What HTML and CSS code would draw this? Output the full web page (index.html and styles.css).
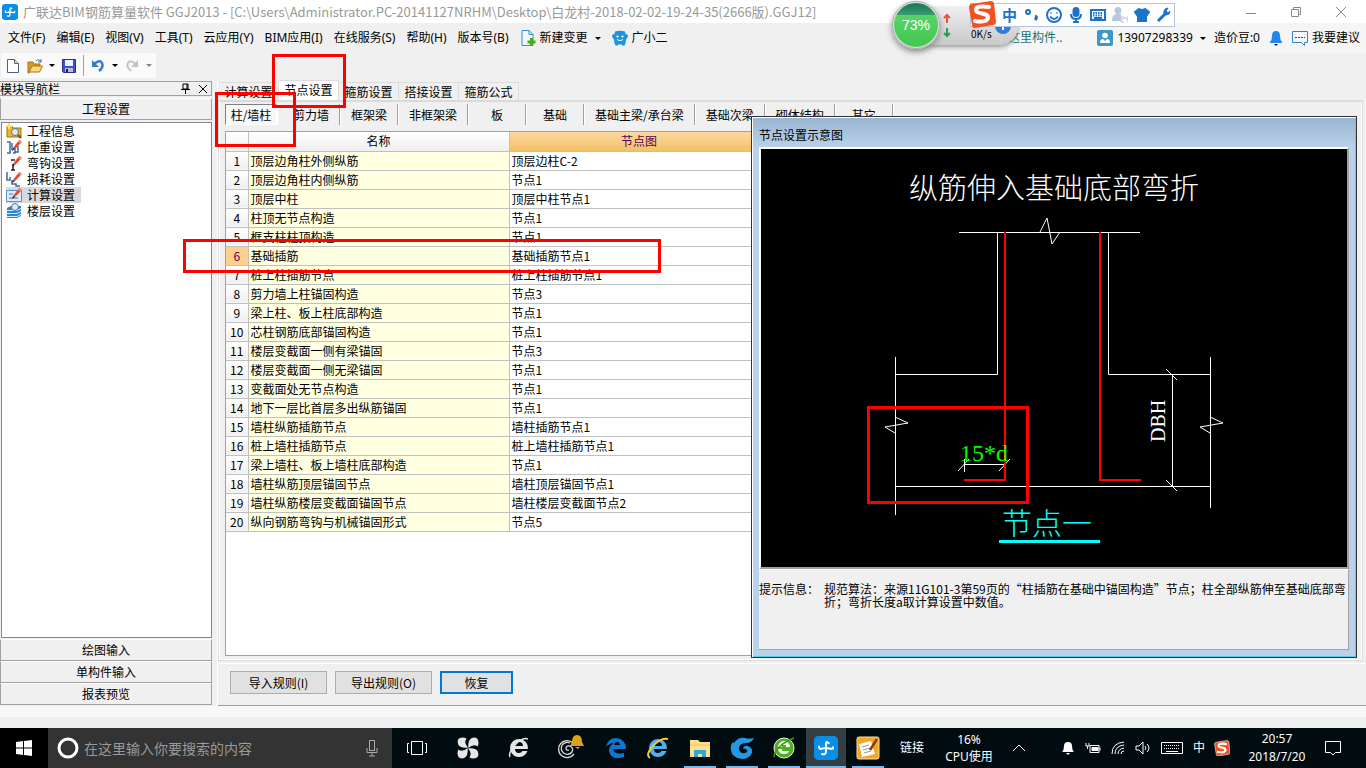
FILE: index.html
```html
<!DOCTYPE html>
<html lang="zh-CN">
<head>
<meta charset="utf-8">
<title>广联达BIM钢筋算量软件 GGJ2013</title>
<link rel="stylesheet" href="styles.css">
</head>
<body>
<svg class="defs" aria-hidden="true">
  <symbol id="glodon" viewBox="0 0 16 16"><rect width="16" height="16" rx="3" fill="#0a8fe8"/><path d="M9.800 4.800Q8 2.800 8 5.500V10q0 3-2.600 2M3.300 7q0 1.800 1.700 1.500 3-1 6 0 2 .3 1.700-1" fill="none" stroke="#fff" stroke-width="1.300" stroke-linecap="round"/></symbol>
  <symbol id="sogou" viewBox="0 0 28 28"><path d="M3 4 23 1q2 0 3 2l2 19q0 2-2 3L7 28q-3 0-3-3L1 7q0-2 2-3z" fill="#f4511e"/><path d="M21 7Q8 5 8 10c0 5 13 2 12 8-1 4-8 4-13 3" fill="none" stroke="#fff" stroke-width="4" stroke-linecap="round"/></symbol>
  <symbol id="pencil" viewBox="0 0 16 16"><path d="m7 9 6-8 3 2-7 7z" fill="#e8492a"/><path d="m7 9 2 1-3 2z" fill="#222"/><path d="m12 2 3 2" stroke="#ffb9a5"/></symbol>
  <symbol id="ie" viewBox="0 0 24 24"><path d="M12 3a9 9 0 1 0 8.500 12h-5a4 4 0 0 1-7.500-2h13A9 9 0 0 0 12 3zm-4 7a4 4 0 0 1 8 0z" fill="currentColor"/></symbol>
</svg>

<header class="titlebar">
  <svg class="i16"><use href="#glodon"/></svg>
  <h1>广联达BIM钢筋算量软件 GGJ2013 - [C:\Users\Administrator.PC-20141127NRHM\Desktop\白龙村-2018-02-02-19-24-35(2666版).GGJ12]</h1>
  <div class="winbtns">
    <button aria-label="最小化"><svg class="i12"><path d="M1 7.500h10"/></svg></button>
    <button aria-label="还原"><svg class="i12"><path d="M1.500 3.500h7v7h-7zM3.500 3V1.500h7v7H9"/></svg></button>
    <button aria-label="关闭"><svg class="i12"><path d="m1 1 10 10M11 1 1 11"/></svg></button>
  </div>
</header>

<nav class="menubar">
  <button>文件(F)</button><button>编辑(E)</button><button>视图(V)</button><button>工具(T)</button><button>云应用(Y)</button><button>BIM应用(I)</button><button>在线服务(S)</button><button>帮助(H)</button><button>版本号(B)</button>
  <button class="ico"><svg class="i16" viewBox="0 0 16 16"><path d="M2 .5h7l4 4v11H2z" fill="#eef7fd" stroke="#3a8cc4"/><path d="M9 .5v4h4" fill="none" stroke="#3a8cc4"/><path d="M10 8h3v2.500h2.500v3H13V16h-3v-2.500H7.500v-3H10z" fill="#47ab22"/></svg>新建变更<i class="caret"></i></button>
  <button class="ico"><svg class="i16" viewBox="0 0 16 16"><path d="M3 1.500q5-1.500 10 0l.5 2.500q3.500 0 2 3.500l-1.500 2q0 3-1.500 6h-2.500v-1H6v1H3.500Q2 12.500 2 9.500L.5 7.500Q-1 4 2.500 4z" fill="#1d93e0"/><circle cx="5.500" cy="6.500" r="1.100" fill="#fff"/><circle cx="10.500" cy="6.500" r="1.100" fill="#fff"/><path d="M5 9.500q3 2.500 6 0" fill="none" stroke="#fff"/></svg>广小二</button>
  <div class="account">
    <a class="promo" href="#">这里构件..</a>
    <button class="ico"><svg class="i16" viewBox="0 0 16 16"><rect width="16" height="16" rx="2" fill="#3f97c9"/><circle cx="8" cy="5.500" r="2.800" fill="#fff"/><path d="M3 13q0-4 3-4l2 2 2-2q3 0 3 4z" fill="#fff"/></svg>13907298339<i class="caret"></i></button>
    <span>造价豆:0</span>
    <button aria-label="通知"><svg class="i16 bell" viewBox="0 0 16 16"><path d="M8 1q4 0 4 5 0 4 2 6v1H2v-1q2-2 2-6 0-5 4-5z" fill="#2186f0"/><path d="M6 14h4l-2 2z" fill="#111"/></svg></button>
    <button class="ico"><svg class="i16" viewBox="0 0 16 16"><path d="M.5 1.500h15v11h-3v3l-3-3h-9z" fill="#f7fbff" stroke="#2e84dc"/><path d="M3 7.500h10" stroke="#174a84" stroke-dasharray="2 1"/></svg>我要建议</button>
  </div>
</nav>

<div class="toolbar">
  <div class="tools">
    <button aria-label="新建"><svg class="i16" viewBox="0 0 16 16"><path d="M2.500 1.500h7l4 4v9h-11z" fill="#fff" stroke="#4a627c"/><path d="M9.500 1.500v4h4" fill="#c9dcee" stroke="#4a627c"/></svg></button>
    <button aria-label="打开"><svg class="i16" viewBox="0 0 16 16"><path d="M1 4h5l1 2h6v3H5l-3 6H1z" fill="#d99a1e" stroke="#a87419"/><path d="m2 14 3-6h10.500l-3 6z" fill="#fbd878" stroke="#a87419"/><path d="M9 3q3-3 5 1m0-3v3h-3" fill="none" stroke="#4b6d93"/></svg></button><i class="caret"></i>
    <button aria-label="保存"><svg class="i16" viewBox="0 0 16 16"><path d="M1.500 1.500h13v13h-12l-1-1z" fill="#4351c9" stroke="#28308c"/><path d="M4 2h8v6H4z" fill="#eef1ff"/><path d="M4 10h8v4H4z" fill="#b9bfd0"/><path d="M5 11h2v3H5z" fill="#222"/></svg></button>
    <span class="sep"></span>
    <button aria-label="撤销"><svg class="i16" viewBox="0 0 16 16"><path d="M4 6q6-5 8-1 2 4-3 8" fill="none" stroke="#3979cf" stroke-width="2.500"/><path d="M2 2v7h7z" fill="#3979cf"/></svg></button><i class="caret"></i>
    <button aria-label="重做"><svg class="i16" viewBox="0 0 16 16"><path d="M12 6Q6 1 4 5q-2 4 3 8" fill="none" stroke="#c3c3c3" stroke-width="2"/><path d="M14 2v7H7z" fill="#c3c3c3"/></svg></button><i class="caret off"></i>
  </div>
</div>

<main class="workspace">
  <aside class="nav">
    <div class="navhead"><span>模块导航栏</span>
      <button aria-label="固定"><svg class="i12"><path d="M4 1h5v5H4zM2 6.500h9M6.500 7v4M8 1v5" stroke="#000"/></svg></button>
      <button aria-label="关闭面板"><svg class="i12"><path d="m2 2 8 8M10 2l-8 8" stroke="#000"/></svg></button></div>
    <button class="group">工程设置</button>
    <ul class="tree">
      <li><svg class="i16" viewBox="0 0 16 16"><path d="M1 3h5l1 2h8v9H1z" fill="#f0b429" stroke="#9b7414"/><circle cx="9" cy="9" r="3.500" fill="#d7edff" stroke="#59728a"/><path d="m12 12 3 3" stroke="#7b4a20" stroke-width="2"/><path d="M3 0v6M0 3h6" stroke="#ffe36b" stroke-width="2"/></svg>工程信息</li>
      <li><svg class="i16" viewBox="0 0 16 16"><path d="M1 3h3v11H1M7 14h2V9M6 4v7M12 7v6h-3" fill="none" stroke="#3c6ea8" stroke-width="1.500"/><use href="#pencil"/></svg>比重设置</li>
      <li><svg class="i16" viewBox="0 0 16 16"><path d="M5 5h4M7 9v6M5 15h4" stroke="#222" stroke-width="1.500"/><use href="#pencil"/></svg>弯钩设置</li>
      <li><svg class="i16" viewBox="0 0 16 16"><path d="M1 1v8h3V6M6 9v4h4v2h4" fill="none" stroke="#3c6ea8" stroke-width="1.500"/><use href="#pencil"/></svg>损耗设置</li>
      <li class="on"><svg class="i16" viewBox="0 0 16 16"><path d="M.5 3.500h15v11H.5z" fill="#dcecff" stroke="#5b8fd0"/><path d="M3 7h4M3 11h9" stroke="#3b78c4"/><use href="#pencil"/></svg>计算设置</li>
      <li><svg class="i16" viewBox="0 0 16 16"><path d="m1 5 4-2h10v10l-4 2H1z" fill="#2e86cf"/><path d="M1 7.500h10l4-2M1 10.500h10l4-2M1 13.500h10l4-2" fill="none" stroke="#d6ecff"/><circle cx="9" cy="4" r="3.500" fill="#d7edff" stroke="#59728a"/></svg>楼层设置</li>
    </ul>
    <button class="group">绘图输入</button>
    <button class="group">单构件输入</button>
    <button class="group">报表预览</button>
  </aside>

  <section class="content">
    <div class="tabs" role="tablist">
      <button role="tab">计算设置</button><button role="tab" class="on" aria-selected="true">节点设置</button><button role="tab">箍筋设置</button><button role="tab">搭接设置</button><button role="tab">箍筋公式</button>
    </div>
    <div class="pane">
      <div class="subtabs">
        <button class="on">柱/墙柱</button><button>剪力墙</button><button>框架梁</button><button>非框架梁</button><button>板</button><button>基础</button><button>基础主梁/承台梁</button><button>基础次梁</button><button>砌体结构</button><button>其它</button>
      </div>
      <div class="grid">
        <table>
          <colgroup><col class="c1"><col class="c2"><col class="c3"></colgroup>
          <thead><tr><th></th><th>名称</th><th class="hot">节点图</th></tr></thead>
          <tbody>
            <tr><th>1</th><td>顶层边角柱外侧纵筋</td><td>顶层边柱C-2</td></tr>
            <tr><th>2</th><td>顶层边角柱内侧纵筋</td><td>节点1</td></tr>
            <tr><th>3</th><td>顶层中柱</td><td>顶层中柱节点1</td></tr>
            <tr><th>4</th><td>柱顶无节点构造</td><td>节点1</td></tr>
            <tr><th>5</th><td>框支柱柱顶构造</td><td>节点1</td></tr>
            <tr class="cur"><th>6</th><td>基础插筋</td><td>基础插筋节点1</td></tr>
            <tr><th>7</th><td>桩上柱插筋节点</td><td>桩上柱插筋节点1</td></tr>
            <tr><th>8</th><td>剪力墙上柱锚固构造</td><td>节点3</td></tr>
            <tr><th>9</th><td>梁上柱、板上柱底部构造</td><td>节点1</td></tr>
            <tr><th>10</th><td>芯柱钢筋底部锚固构造</td><td>节点1</td></tr>
            <tr><th>11</th><td>楼层变截面一侧有梁锚固</td><td>节点3</td></tr>
            <tr><th>12</th><td>楼层变截面一侧无梁锚固</td><td>节点1</td></tr>
            <tr><th>13</th><td>变截面处无节点构造</td><td>节点1</td></tr>
            <tr><th>14</th><td>地下一层比首层多出纵筋锚固</td><td>节点1</td></tr>
            <tr><th>15</th><td>墙柱纵筋插筋节点</td><td>墙柱插筋节点1</td></tr>
            <tr><th>16</th><td>桩上墙柱插筋节点</td><td>桩上墙柱插筋节点1</td></tr>
            <tr><th>17</th><td>梁上墙柱、板上墙柱底部构造</td><td>节点1</td></tr>
            <tr><th>18</th><td>墙柱纵筋顶层锚固节点</td><td>墙柱顶层锚固节点1</td></tr>
            <tr><th>19</th><td>墙柱纵筋楼层变截面锚固节点</td><td>墙柱楼层变截面节点2</td></tr>
            <tr><th>20</th><td>纵向钢筋弯钩与机械锚固形式</td><td>节点5</td></tr>
          </tbody>
        </table>
      </div>
    </div>
    <div class="actions">
      <button>导入规则(I)</button><button>导出规则(O)</button><button class="default">恢复</button>
    </div>
  </section>
</main>

<section class="dialog" role="dialog" aria-labelledby="dlg">
  <h2 id="dlg">节点设置示意图</h2>
  <div class="canvas">
    <svg viewBox="761 149 586 418">
      <g class="white">
        <path d="M959 232.500h181M997.500 232v142.500H895M1108.500 232v142.500h102M895.500 357v158M1210.500 357v151M895 486.500h316M1172.500 374v112M964 464.500h41M964.500 459v13"/>
        <path d="m1040 232 7-14 5 26 8-12M895 417l13 6-23 4 10 6M1210 417l13 6-23 4 10 6M1166 369l11 11M1166 480l11 11M958 471l11-12M999 471l11-12"/>
      </g>
      <path class="rebar" d="M1005 232v248h-41M1100 232v248h41"/>
      <text class="cap" x="909" y="199">纵筋伸入基础底部弯折</text>
      <text class="dim" x="960" y="461">15*d</text>
      <text class="dbh" transform="translate(1165 442) rotate(-90)">DBH</text>
      <text class="node" x="1002" y="534">节点一</text>
      <path class="under" d="M999 541.500h101"/>
    </svg>
  </div>
  <div class="tip"><span>提示信息：</span><p>规范算法：来源11G101-3第59页的“柱插筋在基础中锚固构造”节点；柱全部纵筋伸至基础底部弯<br>折；弯折长度a取计算设置中数值。</p></div>
</section>

<div class="speed">
  <div class="ball">73%</div>
  <svg class="arrows" viewBox="0 0 8 24"><path d="M4 10V3M1 5l3-3 3 3" stroke="#e4573d"/><path d="M4 15v7m-3-2 3 3 3-3" stroke="#2a9c55"/></svg>
  <span>0K/s</span>
  <svg class="plus" viewBox="0 0 16 16"><circle cx="8" cy="8" r="8" fill="#3579dc"/><path d="M8 4v8M4 8h8" stroke="#fff" stroke-width="2"/></svg>
</div>
<div class="ime">
  <svg class="logo"><use href="#sogou"/></svg>
  <strong>中</strong>
  <svg viewBox="0 0 16 16"><circle cx="4" cy="5" r="2"/><path d="M11 9q3 1 0 4" stroke-width="3"/></svg>
  <svg viewBox="0 0 16 16"><circle cx="8" cy="8" r="7"/><path d="M5 5.500v1M11 5.500v1M4 9.500q4 5 8 0"/></svg>
  <svg viewBox="0 0 16 16"><rect x="5.500" y="1" width="5" height="8" rx="2.500" fill="#1d73c8"/><path d="M3 7q0 5 5 5t5-5M8 12v3M5 15h6"/></svg>
  <svg viewBox="0 0 16 16"><rect x="1" y="3" width="14" height="10"/><path d="M3 6h10M3 8.500h10" stroke-dasharray="1.500 1"/><path d="M4 11h8"/></svg>
  <svg viewBox="0 0 16 16" class="pale"><circle cx="6" cy="3.500" r="2.500" fill="#b9c8dc"/><path d="M1 13q0-5 4-5h3v5z" fill="#b9c8dc"/><path d="M9 10h3v2H9v3h3m2-5v2h2m0-3v6" stroke-width="1"/></svg>
  <svg viewBox="0 0 16 16"><path d="m5 2-4 3 2 3 1-1v7h8V7l1 1 2-3-4-3q-3 2-6 0z" fill="#1d73c8"/></svg>
  <svg viewBox="0 0 16 16"><path d="m2 14 7-7" stroke-width="3"/><path d="M14 4q0 4-4 4-3-1-2-4 1-3 4-3l-2 3 2 2z" fill="#1d73c8" stroke-width="1"/></svg>
</div>

<div class="mark m1"></div><div class="mark m2"></div><div class="mark m3"></div><div class="mark m4"></div>

<footer class="taskbar">
  <button class="start" aria-label="开始"><svg class="i16" viewBox="0 0 16 16"><path d="m0 2 7-1v6.500H0zM8 1l8-1v7.500H8zM0 8.500h7V15l-7-1zM8 8.500h8V16l-8-1z" fill="#fff"/></svg></button>
  <label class="search"><svg class="ring" viewBox="0 0 22 22"><circle cx="11" cy="11" r="9"/></svg><input type="text" placeholder="在这里输入你要搜索的内容" aria-label="搜索"><svg class="mic" viewBox="0 0 12 18"><rect x="3.500" y="1.500" width="5" height="10"/><path d="M1 9v4.500h10V9M6 14v3M3 17h6"/></svg></label>
  <div class="apps">
    <button aria-label="任务视图"><svg viewBox="0 0 24 24" class="line"><path d="M6.500 5.500h11v13h-11zM4 7.500H2.500v9H4M20 7.500h1.500v9H20"/></svg></button>
    <button aria-label="应用"><svg viewBox="0 0 24 24" fill="#e6e6e6"><path id="petal" d="M12 11.500Q5 12.500 2.500 9 .5 5 3 2.500q4-2 7.500 0-3 4 1.500 9z"/><use href="#petal" transform="rotate(90 12 12)"/><use href="#petal" transform="rotate(180 12 12)"/><use href="#petal" transform="rotate(270 12 12)"/></svg></button>
    <button aria-label="浏览器" class="grey"><svg viewBox="0 0 24 24"><use href="#ie"/><path d="M3 21Q1 17 8 9t13-6" fill="none" stroke="#e6e6e6" stroke-width="1.500"/></svg></button>
    <button aria-label="提醒"><svg class="wide" viewBox="0 0 28 26"><path d="M17 8A8.500 8.500 0 1 0 18 19M14 8a6 6 0 1 0 2 9q2-4-2-6-4-1-4 3 1 2 3 1" fill="none" stroke="#ddd" stroke-width="1.300"/><path d="M21 0q5 0 5 7l2 4H14l2-4q0-7 5-7zM19 12h5l-2 2z" fill="#e0a011"/></svg></button>
    <button aria-label="Edge" class="edge"><svg viewBox="0 0 24 24"><path d="M2 11Q4 2 12 2q10 1 10 11H9q1 6 11 4v4Q7 25 5 15q0-5 5-8-5 0-8 4zm8-2h6q-1-4-3-3-2 0-3 3z" fill="#0b78d6"/></svg></button>
    <button aria-label="Internet Explorer" class="blue"><svg viewBox="0 0 24 24"><use href="#ie"/><path d="M4 22Q-1 19 7 10T22 3" fill="none" stroke="#f7c835" stroke-width="2"/></svg></button>
    <button aria-label="文件资源管理器" class="run"><svg viewBox="0 0 24 24"><path d="M2 4h8l2 2h10v15H2z" fill="#ffdf8a"/><path d="M2 9h20" stroke="#f4c14f"/><path d="M6 21v-7h12v7h-4v-3h-4v3z" fill="#2ba7dc"/></svg></button>
    <button aria-label="广联达G" class="run"><svg viewBox="0 0 24 24"><path d="M24 2q-2 5-8 5-7 0-7 6 1 5 6 4 3-1 2-3-2-2-4-1 1-4 5-3 5 2 4 7-3 6-10 6Q2 22 1 14q-1-5 2-8l1 1q4-6 11-5 5 1 9 0z" fill="#2597e4"/></svg></button>
    <button aria-label="360浏览器" class="run"><svg viewBox="0 0 24 24"><circle cx="12" cy="12" r="10" fill="#4fb022" stroke="#e6f7da"/><path d="M12 5a6 6 0 0 0-6 6h12a6 6 0 0 0-6-6zM6 13h12q-1 5-6 5t-6-5z" fill="#fff"/><path d="M10 9h4v2h-4zM10 13h8v2h-8z" fill="#4fb022"/><path d="M2 21Q3 10 22 2" fill="none" stroke="#3f9b18" stroke-width="1.500"/></svg></button>
    <button aria-label="广联达BIM" class="run cur"><svg><use href="#glodon"/></svg></button>
    <button aria-label="记事" class="run"><svg viewBox="0 0 24 24"><rect x="1" y="1" width="22" height="22" rx="2" fill="#f5a623" stroke="#ffe2a6"/><path d="M3 8 15 5l4 13-13 3z" fill="#fff"/><path d="m6 11 7-2M7 14l7-2M8 17l7-2" stroke="#997"/><path d="m14 14 7-11" stroke="#8c3b12" stroke-width="2.500"/></svg></button>
  </div>
  <div class="tray">
    <span>链接</span>
    <span class="cpu">16%<br>CPU使用</span>
    <svg class="chev" viewBox="0 0 16 16"><path d="m2 11 6-6 6 6"/></svg>
    <div class="icons">
      <svg viewBox="0 0 16 16"><path d="M2 12q2-2 2-6 0-4 4-4t4 4q0 4 2 6zM6 13h4l-2 2z" fill="#fff" stroke="none"/></svg>
      <svg viewBox="0 0 16 16"><path d="M5 5.500h9v7H5zM15 7.500v3"/><path d="M7 7.500h6v3H7z" fill="#fff"/><path d="M1 3v3h3V3M2.500 6v3"/></svg>
      <svg viewBox="0 0 16 16"><path d="M2 14Q2 3 14 2M5 14q0-8 9-9M8 14q0-5 6-6M11 14q0-3 3-3"/></svg>
      <svg viewBox="0 0 16 16"><path d="M1 6h3l4-4v12l-4-4H1zM10 6q2 2 0 4M12 4q4 4 0 8"/></svg>
      <svg class="kb" viewBox="0 0 24 16"><path d="M1.500 2.500h21v11h-21z"/><path d="M4 5.500h16M4 8.500h16" stroke-dasharray="1 1"/><path d="M6 11.500h12"/></svg>
      <span>中</span>
      <svg viewBox="0 0 28 28"><use href="#sogou"/></svg>
    </div>
    <span class="clock">20:57<br>2018/7/20</span>
    <button class="note" aria-label="操作中心"><svg class="i16" viewBox="0 0 16 16"><path d="M.5 1.500h15v11h-5L8 15l-2.500-2.500h-5z"/></svg></button>
  </div>
</footer>
</body>
</html>
```
FILE: styles.css
```css
* { box-sizing: border-box; }
body {
  margin: 0; height: 100vh; display: flex; flex-direction: column;
  position: relative; overflow: hidden; background: #f0f0f0; color: #000;
  font: 12px/16px "Noto Sans CJK SC", sans-serif;
}
button { font: inherit; color: inherit; background: none; border: 0; padding: 0; margin: 0; white-space: nowrap; }
h1, h2, p, ul { margin: 0; padding: 0; font: inherit; }
svg { flex: none; }
.defs { position: absolute; width: 0; height: 0; }
.i16 { width: 16px; height: 16px; }
.i12 { width: 12px; height: 12px; fill: none; stroke: #888; display: block; }
.caret { border: 3px solid transparent; border-top-color: #000; border-bottom: 0; width: 6px; flex: none; }
.off { border-top-color: #888; }

.titlebar, .menubar, .account { font-family: "Noto Sans", "Noto Sans CJK SC", sans-serif; }
.titlebar { height: 23px; flex: none; display: flex; align-items: center; gap: 5px; padding-left: 2px; background: #fff; color: #999; }
.titlebar h1 { flex: 1; white-space: nowrap; font: 13px/16px "Noto Sans CJK SC", sans-serif; }
.winbtns { display: flex; gap: 33px; padding-right: 19px; }

.menubar { height: 30px; flex: none; display: flex; align-items: center; gap: 11px; padding-left: 8px; }
.ico { display: flex; align-items: center; gap: 4px; }
.ico .caret { margin-left: 3px; }
.account { margin-left: auto; align-self: stretch; display: flex; align-items: center; gap: 8px; padding-right: 6px; background: #f5f5f5; }
.bell { display: block; }
.promo { color: #167272; text-decoration: none; margin-right: 27px; }

.toolbar { height: 28px; flex: none; padding-left: 1px; }
.tools { display: inline-flex; align-items: center; gap: 6px; height: 25px; padding: 0 4px; background: #fafafa; }
.tools .i16 { display: block; }
.sep { width: 1px; height: 21px; background: #a0a0a0; }

.workspace { flex: 1; min-height: 0; display: flex; gap: 5px; }
.workspace::after { content: none; }
.nav { width: 212px; flex: none; display: flex; flex-direction: column; padding-bottom: 1px; }
.navhead { height: 15px; line-height: 13px; display: flex; align-items: center; gap: 6px; padding-right: 2px; margin-bottom: 2px; border: 1px solid #a0a0a0; border-left: 0; }
.navhead span { flex: 1; font-size: 12px; }
.group { height: 22px; background: #f0f0f0; border: 1px solid #a0a0a0; border-top-color: #fff; }
.tree { flex: 1; list-style: none; margin: 2px 0 1px 1px; padding: 0 4px; background: #fff; border: 1px solid #828790; }
.tree li { display: flex; align-items: center; gap: 5px; width: 75px; height: 16px; white-space: nowrap; }
.tree .on { background: #d9d9d9; }

.workspace { margin-bottom: 22px; box-shadow: 0 11px #f8f8f8; }
.content { flex: 1; min-width: 0; display: flex; flex-direction: column; border-left: 1px solid #fff; }
.tabs { display: flex; align-items: flex-end; height: 19px; padding-left: 1px; }
.tabs button { width: 60px; height: 18px; border: 1px solid #dcdcdc; border-bottom: 0; border-left-width: 0; }
.tabs .on { height: 20px; background: #fff; padding-bottom: 2px; }
.pane { flex: 1; min-height: 0; display: flex; flex-direction: column; margin-right: 3px; padding: 2px 4px 3px 5px; border: 2px solid #fff; border-top-color: #d9d9d9; outline: 1px solid #dcdcdc; outline-offset: -1px; }
.subtabs { display: flex; height: 21px; margin: 0 0 6px; }
.subtabs button { min-width: 58px; padding: 0 10px 0 11px; border-right: 1px solid #a0a0a0; box-shadow: 1px 0 #fff; }
.subtabs .on { min-width: 52px; padding: 0 4px; margin-right: 5px; background: #f8f8f8; border: 1px solid #fff; border-top-color: #808080; border-left-color: #808080; }
.grid { flex: 1; min-height: 0; background: #fff; border: 1px solid #a0a0a8; }
table { border-collapse: collapse; table-layout: fixed; width: 543px; }
.c1 { width: 22px; } .c2 { width: 261px; } .c3 { width: 260px; }
th, td { height: 19px; padding: 0 0 0 2px; line-height: 16px; font-weight: normal; text-align: left; white-space: nowrap; border-right: 1px solid #c0c0c0; border-bottom: 1px solid #c0c0c0; }
th { padding: 0; text-align: center; background: linear-gradient(#fff, #efefef); }
td:nth-child(2) { background: #ffffe1; }
.hot { background: linear-gradient(#fbd9a0, #f2c064); color: #5a005a; }
.cur th { background: #ffd08a; color: #5a005a; }
.actions { display: flex; gap: 8px; padding: 7px 12px 11px; margin-top: 2px; border-top: 1px solid #fff; border-bottom: 1px solid #a0a0a0; }
.actions button { width: 97px; height: 23px; background: #e1e1e1; border: 1px solid #adadad; }
.actions .default { width: 73px; border: 2px solid #0078d7; }

.dialog { position: absolute; top: 116px; right: 9px; width: 606px; padding: 0 7px 7px; border: 1px solid #333; background: linear-gradient(#99b4d1, #b9d1ea 30px); box-shadow: inset 1px 1px #fff, inset -1px -1px #5cc8f0; }
.dialog h2 { height: 30px; padding-top: 10px; }
.canvas { background: #000; border: 2px solid #fff; border-right-color: #a0a0a0; border-bottom-color: #a0a0a0; }
.canvas svg { display: block; width: 100%; }
.white { fill: none; stroke: #fff; }
.rebar { fill: none; stroke: #f00; stroke-width: 2; }
.cap { fill: #fff; font-size: 29px; font-weight: 300; }
.canvas .dim { fill: #0f0; font: 24px "Liberation Serif", serif; }
.dbh { fill: #fff; font: 20px "Liberation Serif", serif; }
.node { fill: #0ff; font-size: 30px; font-weight: 300; }
.under { stroke: #0ff; stroke-width: 3; }
.tip { display: flex; gap: 5px; height: 81px; padding-top: 12px; line-height: 13px; white-space: nowrap; background: #f0f0f0; border: 1px solid #fff; border-left: 0; border-right-color: #a0a0a0; border-bottom-color: #a0a0a0; }

.speed { position: absolute; left: 892px; top: 0; width: 128px; height: 50px; }
.speed::before { content: ""; position: absolute; left: 20px; top: 7px; width: 106px; height: 38px; border-radius: 4px 4px 19px 4px; background: linear-gradient(#efefef, #c9c9c9); box-shadow: 0 2px 4px #999; }
.ball { position: absolute; left: 0; top: 1px; width: 48px; height: 48px; border: 2px solid #e4e4e4; outline: 1px solid #aaa; outline-offset: -1px; border-radius: 50%; background: linear-gradient(#16785a 0, #37996b 26%, #58d465 28%, #43c653); color: #fff; font: 14px/44px "Liberation Sans", sans-serif; text-align: center; box-shadow: 0 3px 6px #888; }
.arrows { position: absolute; left: 51px; top: 12px; width: 8px; height: 26px; fill: none; stroke-width: 2; }
.speed span { position: absolute; left: 79px; top: 26px; font-size: 10px; }
.plus { position: absolute; left: 103px; top: 18px; width: 16px; height: 16px; }
.ime { position: absolute; left: 970px; top: 3px; width: 205px; height: 24px; display: flex; align-items: center; gap: 6px; padding-left: 31px; background: #fff; border: 1px solid #b4c6dc; color: #1d73c8; }
.ime svg { width: 16px; height: 16px; fill: none; stroke: #1d73c8; stroke-width: 2; }
.ime strong { font-size: 15px; width: 16px; }
.ime .pale { stroke: #b9c8dc; }
.ime .logo { position: absolute; left: -3px; top: -4px; width: 28px; height: 28px; stroke: none; }

.mark { position: absolute; border: 3px solid #f00; }
.m1 { left: 272px; top: 54px; width: 74px; height: 54px; }
.m2 { left: 215px; top: 92px; width: 81px; height: 55px; }
.m3 { left: 183px; top: 239px; width: 478px; height: 34px; }
.m4 { left: 867px; top: 406px; width: 162px; height: 98px; }

.taskbar { height: 40px; flex: none; display: flex; align-items: center; position: relative; background: #010c10; color: #fff; font-family: "Noto Sans", "Noto Sans CJK SC", sans-serif; }
.start { width: 48px; height: 40px; background: #000; }
.start svg { display: block; margin: auto; }
.search { width: 344px; height: 40px; display: flex; align-items: center; gap: 5px; padding: 0 14px 0 9px; background: #333; }
.search input { flex: 1; min-width: 0; padding: 0; border: 0; outline: 0; background: none; color: #fff; font: 14px "Noto Sans CJK SC", sans-serif; }
.search input::placeholder { color: #999; }
.ring { width: 22px; height: 22px; fill: none; stroke: #fff; stroke-width: 3; }
.mic { width: 12px; height: 18px; fill: none; stroke: #aaa; }
.apps { display: flex; height: 40px; gap: 2px; }
.apps button { width: 40px; height: 40px; display: grid; place-items: center; }
.apps button:nth-child(-n+4) { width: 49px; }
.apps svg { width: 24px; height: 24px; }
.apps .wide { width: 28px; height: 26px; }
.line { fill: none; stroke: #fff; }
.grey { color: #e6e6e6; } .blue { color: #4fb0ee; }
.apps .run { background: linear-gradient(#76b9ed, #76b9ed) bottom / 32px 2px no-repeat; }
.apps .cur { background: #343f43; box-shadow: inset 0 -2px #76b9ed; }
.tray { margin-left: auto; display: flex; align-items: center; text-align: center; }
.tray svg { fill: none; stroke: #fff; }
.cpu { margin-left: 21px; width: 48px; white-space: nowrap; line-height: 17px; }
.chev { width: 16px; margin-left: 18px; height: 16px; }
.icons { display: flex; align-items: center; gap: 9px; margin-left: 33px; }
.icons svg { width: 16px; height: 16px; }
.icons .kb { width: 24px; }
.clock { margin-left: 17px; width: 60px; line-height: 18px; }
.note { margin: 0 25px 0 18px; }
.note svg { display: block; }
```
